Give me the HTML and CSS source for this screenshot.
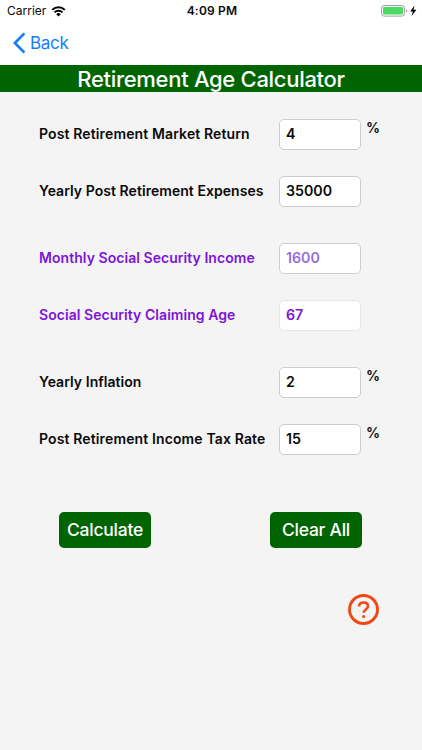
FILE: index.html
```
<!DOCTYPE html>
<html lang="en">
<head>
    <meta charset="UTF-8">
    <meta name="viewport" content="width=device-width, initial-scale=1.0">
    <title>Retirement Age Calculator</title>
    <link rel="stylesheet" href="styles.css">
</head>
<body>
    <div class="status-bar">
        <div class="status-left">
            <span class="carrier">Carrier</span>
            <svg class="wifi" width="15" height="11" viewBox="0 0 15 11">
                <path d="M1.2 3.9a9 9 0 0 1 12.6 0M3.5 6.4a5.7 5.7 0 0 1 8 0" fill="none" stroke="#000" stroke-width="2"/>
                <path d="M7.5 10.4L5.2 8.2a3.2 3.2 0 0 1 4.6 0z" fill="#000"/>
            </svg>
        </div>
        <span class="time">4:09 PM</span>
        <div class="status-right">
            <svg width="36" height="12" viewBox="0 0 36 12">
                <rect x="0.5" y="0.5" width="23" height="10.6" rx="2.6" fill="#fff" stroke="#a0a0a0"/>
                <rect x="2" y="2" width="20" height="7.6" rx="1" fill="#4cd964"/>
                <path d="M25 4v3.6q1.3-.6 1.3-1.8T25 4z" fill="#a0a0a0"/>
                <path d="M33.4.6L29.2 6.5h2.6l-1.2 4.6 4.8-6.3h-2.8z" fill="#000"/>
            </svg>
        </div>
    </div>
    <div class="nav-bar">
        <a href="#" class="back">
            <svg width="13" height="22" viewBox="0 0 13 22">
                <path d="M11.4 1.4L1.9 11l9.5 9.6" fill="none" stroke="#147efb" stroke-width="2.7"/>
            </svg>
            <span>Back</span>
        </a>
    </div>
    <h1>Retirement Age Calculator</h1>

    <form id="calcForm">
        <div class="form-group">
            <label for="marketReturn" class="wide">Post Retirement Market Return</label>
            <input type="text" id="marketReturn" value="4">
            <span class="unit">%</span>
        </div>
        <div class="form-group">
            <label for="expenses">Yearly Post Retirement Expenses</label>
            <input type="text" id="expenses" value="35000">
        </div>
        <div class="form-group social first">
            <label for="ssIncome">Monthly Social Security Income</label>
            <input type="text" id="ssIncome" placeholder="1600">
        </div>
        <div class="form-group social">
            <label for="ssAge">Social Security Claiming Age</label>
            <input type="text" id="ssAge" class="light" value="67">
        </div>
        <div class="form-group first">
            <label for="inflation">Yearly Inflation</label>
            <input type="text" id="inflation" value="2">
            <span class="unit">%</span>
        </div>
        <div class="form-group">
            <label for="taxRate" class="wide">Post Retirement Income Tax Rate</label>
            <input type="text" id="taxRate" value="15">
            <span class="unit">%</span>
        </div>
        <div class="buttons">
            <button type="button">Calculate</button>
            <button type="reset">Clear All</button>
        </div>
    </form>
    <div class="help-row">
        <button type="button" class="help" aria-label="Help">
            <svg width="31" height="31" viewBox="0 0 31 31" fill="none" stroke="#f04a14">
                <circle cx="15.5" cy="15.5" r="14" stroke-width="2.9"/>
                <path d="M11.1 12.5c0-2.6 1.8-4.1 4.5-4.1s4.4 1.5 4.4 3.8c0 3.2-4.3 3.2-4.3 6.5" stroke-width="2.5"/>
                <circle cx="15.6" cy="22.5" r="1.6" fill="#f04a14" stroke="none"/>
            </svg>
        </button>
    </div>
</body>
</html>
```
FILE: styles.css
```
* {
    box-sizing: border-box;
}
body {
    margin: 0;
    height: 750px;
    overflow: hidden;
    background-color: #f4f4f4;
    font-family: Inter, "Liberation Sans", sans-serif;
    color: #0a0a0a;
}
.status-bar {
    display: grid;
    grid-template-columns: 1fr auto 1fr;
    align-items: center;
    height: 22px;
    padding: 0 5px 0 7px;
    background-color: #fff;
    font-size: 12px;
    line-height: 22px;
}
.status-left {
    display: flex;
    align-items: center;
    gap: 5px;
}
.time {
    font-weight: 600;
    letter-spacing: 0.2px;
}
.status-right {
    display: flex;
    justify-content: flex-end;
}
.nav-bar {
    height: 43px;
    padding: 0 13px;
    background-color: #fff;
}
.back {
    display: inline-flex;
    align-items: center;
    gap: 4px;
    height: 42px;
    color: #147efb;
    font-size: 17px;
    letter-spacing: -0.3px;
    text-decoration: none;
}
h1 {
    margin: 0;
    height: 27px;
    background-color: #006400;
    color: #fff;
    font-size: 22px;
    font-weight: 500;
    line-height: 28px;
    letter-spacing: -0.3px;
    text-align: center;
}
form {
    padding: 27px 39px 0;
}
.form-group {
    display: flex;
    align-items: center;
    height: 31px;
    margin-bottom: 26px;
}
.form-group.first {
    margin-top: 36px;
}
.form-group label {
    width: 240px;
    padding-bottom: 2px;
    font-size: 14px;
    font-weight: 600;
    letter-spacing: 0.05px;
    white-space: nowrap;
}
.form-group label.wide {
    letter-spacing: 0.13px;
}
.form-group input {
    width: 82px;
    height: 31px;
    padding: 0 7px 2px 6px;
    border: 1px solid #cdcdcd;
    border-radius: 5px;
    background-color: #fff;
    color: #0a0a0a;
    font-family: inherit;
    font-size: 14.2px;
    font-weight: 600;
}
.form-group input.light {
    border-color: #e6e6e6;
}
.social label,
.form-group.social input {
    color: #7d14d8;
}
.form-group.social input::placeholder {
    color: #9370db;
}
.unit {
    align-self: flex-start;
    margin-left: 5px;
    font-size: 14px;
    font-weight: 600;
    line-height: 18px;
}
.buttons {
    display: flex;
    justify-content: space-between;
    padding: 31px 21px 0 20px;
}
.buttons button {
    width: 92px;
    height: 36px;
    padding: 0 0 2px;
    border: none;
    border-radius: 5px;
    background-color: #006400;
    color: #fff;
    font-family: inherit;
    font-size: 17.5px;
    font-weight: 500;
    letter-spacing: -0.25px;
}
.help-row {
    display: flex;
    justify-content: flex-end;
    padding: 46px 43px 0 0;
}
.help {
    display: flex;
    padding: 0;
    border: none;
    background: none;
}
```
